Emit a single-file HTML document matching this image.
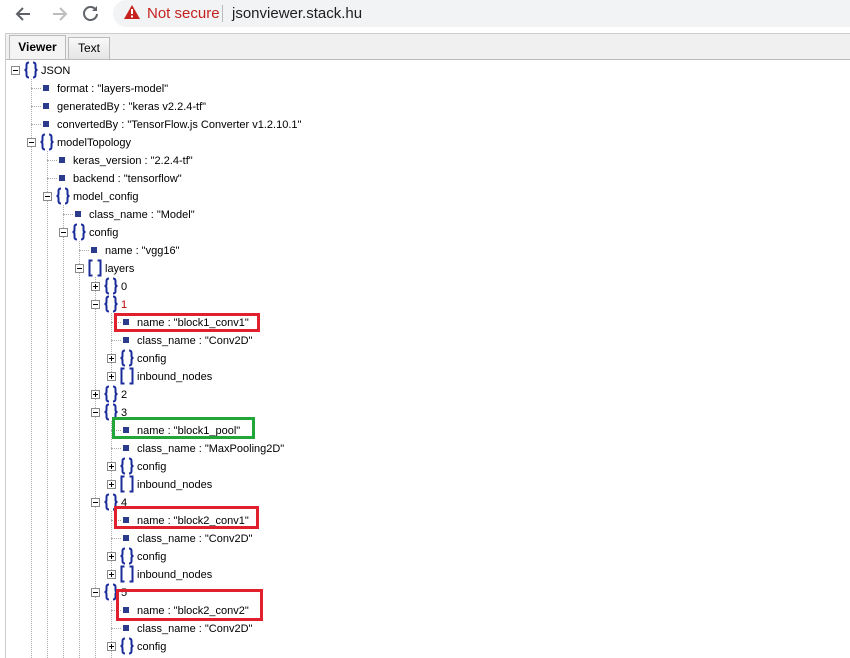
<!DOCTYPE html>
<html><head><meta charset="utf-8"><style>
*{margin:0;padding:0;box-sizing:border-box}
html,body{width:850px;height:658px;overflow:hidden}
body{background:#fff;font-family:"Liberation Sans",Arial,sans-serif;position:relative}
#bar{position:absolute;left:0;top:0;width:850px;height:30px;background:#fff}
#omni{position:absolute;left:113px;top:0;width:737px;height:27px;background:#f1f3f4;border-radius:14px 0 0 14px}
#panel{position:absolute;left:5px;top:33px;width:845px;height:625px;border-left:1px solid #ccc;border-top:1px solid #ccc;background:#f0f0f0}
.tab{position:absolute;top:37px;height:23px;border:1px solid #bbb;border-bottom:none;font-size:12px;line-height:21px;text-align:center;background:linear-gradient(#f8f8f8,#e4e4e4)}
#content{position:absolute;left:6px;top:59px;width:844px;height:599px;background:#fff;border-top:1px solid #bbb}
.t{position:absolute;font-size:11px;line-height:14px;color:#000;white-space:nowrap}
.sq{position:absolute;width:6px;height:6px;background:#2c3b8c}
.tg{position:absolute;width:9px;height:9px;border:1px solid #8a8a8a;background:#fff}
.tg::before{content:"";position:absolute;left:1px;top:3px;width:5px;height:1px;background:#000}
.tg.p::after{content:"";position:absolute;left:3px;top:1px;width:1px;height:5px;background:#000}
.br{position:absolute}
.vl{position:absolute;width:0;border-left:1px dotted #aaa}
.hl{position:absolute;height:0;border-top:1px dotted #aaa}
.box{position:absolute;border:3px solid #e0202c}
#tree{position:absolute;left:0;top:0;width:850px;height:658px;overflow:hidden}
</style></head><body>
<div id="bar">
<svg style="position:absolute;left:14px;top:6px" width="18" height="16"><path d="M16 8H3M9 2L3 8l6 6" stroke="#5f6368" stroke-width="2" fill="none"/></svg>
<svg style="position:absolute;left:51px;top:6px" width="18" height="16"><path d="M2 8h13M9 2l6 6-6 6" stroke="#bdbdbd" stroke-width="2" fill="none"/></svg>
<svg style="position:absolute;left:82px;top:4px" width="18" height="18"><path d="M14 6A6.5 6.5 0 1 0 15 10" stroke="#5f6368" stroke-width="2" fill="none"/><path d="M15 2v5h-5z" fill="#5f6368"/></svg>
<div id="omni"></div>
<svg style="position:absolute;left:124px;top:5px" width="16" height="14"><path d="M8 0L16 14H0z" fill="#c5221f"/><rect x="7" y="4" width="2" height="5" fill="#fff"/><rect x="7" y="10.5" width="2" height="2" fill="#fff"/></svg>
<div style="position:absolute;left:147px;top:5px;font-size:15px;color:#c5221f">Not secure</div>
<div style="position:absolute;left:222px;top:5px;width:1px;height:17px;background:#bbb"></div>
<div style="position:absolute;left:232px;top:5px;font-size:15px;color:#202124">jsonviewer.stack.hu</div>
</div>
<div id="panel"></div>
<div class="tab" style="left:9px;width:57px;top:35px;height:25px;background:#f4f4f4;font-weight:bold;line-height:23px">Viewer</div>
<div class="tab" style="left:68px;width:42px">Text</div>
<div id="content"></div>
<div id="tree"></div>
<script>
var rows=[
[0,'o','{','JSON'],[1,'l','','format : "layers-model"'],[1,'l','','generatedBy : "keras v2.2.4-tf"'],[1,'l','','convertedBy : "TensorFlow.js Converter v1.2.10.1"'],
[1,'o','{','modelTopology'],[2,'l','','keras_version : "2.2.4-tf"'],[2,'l','','backend : "tensorflow"'],[2,'o','{','model_config'],
[3,'l','','class_name : "Model"'],[3,'o','{','config'],[4,'l','','name : "vgg16"'],[4,'o','[','layers'],
[5,'c','{','0'],[5,'o','{','1',1],[6,'l','','name : "block1_conv1"'],[6,'l','','class_name : "Conv2D"'],[6,'c','{','config'],[6,'c','[','inbound_nodes'],
[5,'c','{','2'],[5,'o','{','3'],[6,'l','','name : "block1_pool"'],[6,'l','','class_name : "MaxPooling2D"'],[6,'c','{','config'],[6,'c','[','inbound_nodes'],
[5,'o','{','4'],[6,'l','','name : "block2_conv1"'],[6,'l','','class_name : "Conv2D"'],[6,'c','{','config'],[6,'c','[','inbound_nodes'],
[5,'o','{','5'],[6,'l','','name : "block2_conv2"'],[6,'l','','class_name : "Conv2D"'],[6,'c','{','config'],[6,'c','{','x']];
var BR='<svg class="br" width="16" height="18" viewBox="0 0 16 18" style="left:LEFTpx;top:TOPpx"><g stroke="#1a2d9a" stroke-width="2" fill="none">'+
'<path d="M6 1.5Q3.5 1.5 3.5 4V7Q3.5 9 1.5 9Q3.5 9 3.5 11V14Q3.5 16.5 6 16.5"/><path d="M10 1.5Q12.5 1.5 12.5 4V7Q12.5 9 14.5 9Q12.5 9 12.5 11V14Q12.5 16.5 10 16.5"/></g></svg>';
var SB='<svg class="br" width="16" height="18" viewBox="0 0 16 18" style="left:LEFTpx;top:TOPpx"><g stroke="#1a2d9a" stroke-width="2" fill="none">'+
'<path d="M5.5 1.5H2.5V16.5H5.5"/><path d="M10.5 1.5H13.5V16.5H10.5"/></g></svg>';
var h='';
function y(i){return 70+18*i;}
rows.forEach(function(r,i){
 var n=r[0],Y=y(i);
 if(i<33){
 if(r[1]=='l'){
  h+='<div class="hl" style="left:'+(31+16*(n-1))+'px;top:'+Y+'px;width:10px"></div>';
  h+='<div class="sq" style="left:'+(43+16*(n-1))+'px;top:'+(Y-3)+'px"></div>';
  h+='<div class="t" style="left:'+(57+16*(n-1))+'px;top:'+(Y-6)+'px">'+r[3]+'</div>';
 } else {
  var x=11+16*n;
  h+='<div class="tg'+(r[1]=='c'?' p':'')+'" style="left:'+x+'px;top:'+(Y-4)+'px"></div>';
  h+=(r[2]=='{'?BR:SB).replace('LEFT',x+12).replace('TOP',Y-9);
  h+='<div class="t" style="left:'+(41+16*n)+'px;top:'+(Y-6)+'px;'+(r[4]?'color:#b00':'')+'">'+r[3]+'</div>';
 }}
 if(r[1]=='o'){var j=i+1,last=i;while(j<rows.length&&rows[j][0]>n){if(rows[j][0]==n+1)last=j;j++;}
  var bot=(j>=rows.length)?658:y(last);
  h+='<div class="vl" style="left:'+(31+16*n)+'px;top:'+(Y+9)+'px;height:'+(bot-Y-9)+'px"></div>';}
});
h+='<div class="box" style="left:114px;top:313px;width:146px;height:19px"></div>';
h+='<div class="box" style="left:112px;top:417px;width:143px;height:22px;border-color:#22a63a"></div>';
h+='<div class="box" style="left:114px;top:506px;width:145px;height:23px"></div>';
h+='<div class="box" style="left:116px;top:589px;width:147px;height:32px"></div>';
document.getElementById('tree').innerHTML=h;
</script>
</body></html>
